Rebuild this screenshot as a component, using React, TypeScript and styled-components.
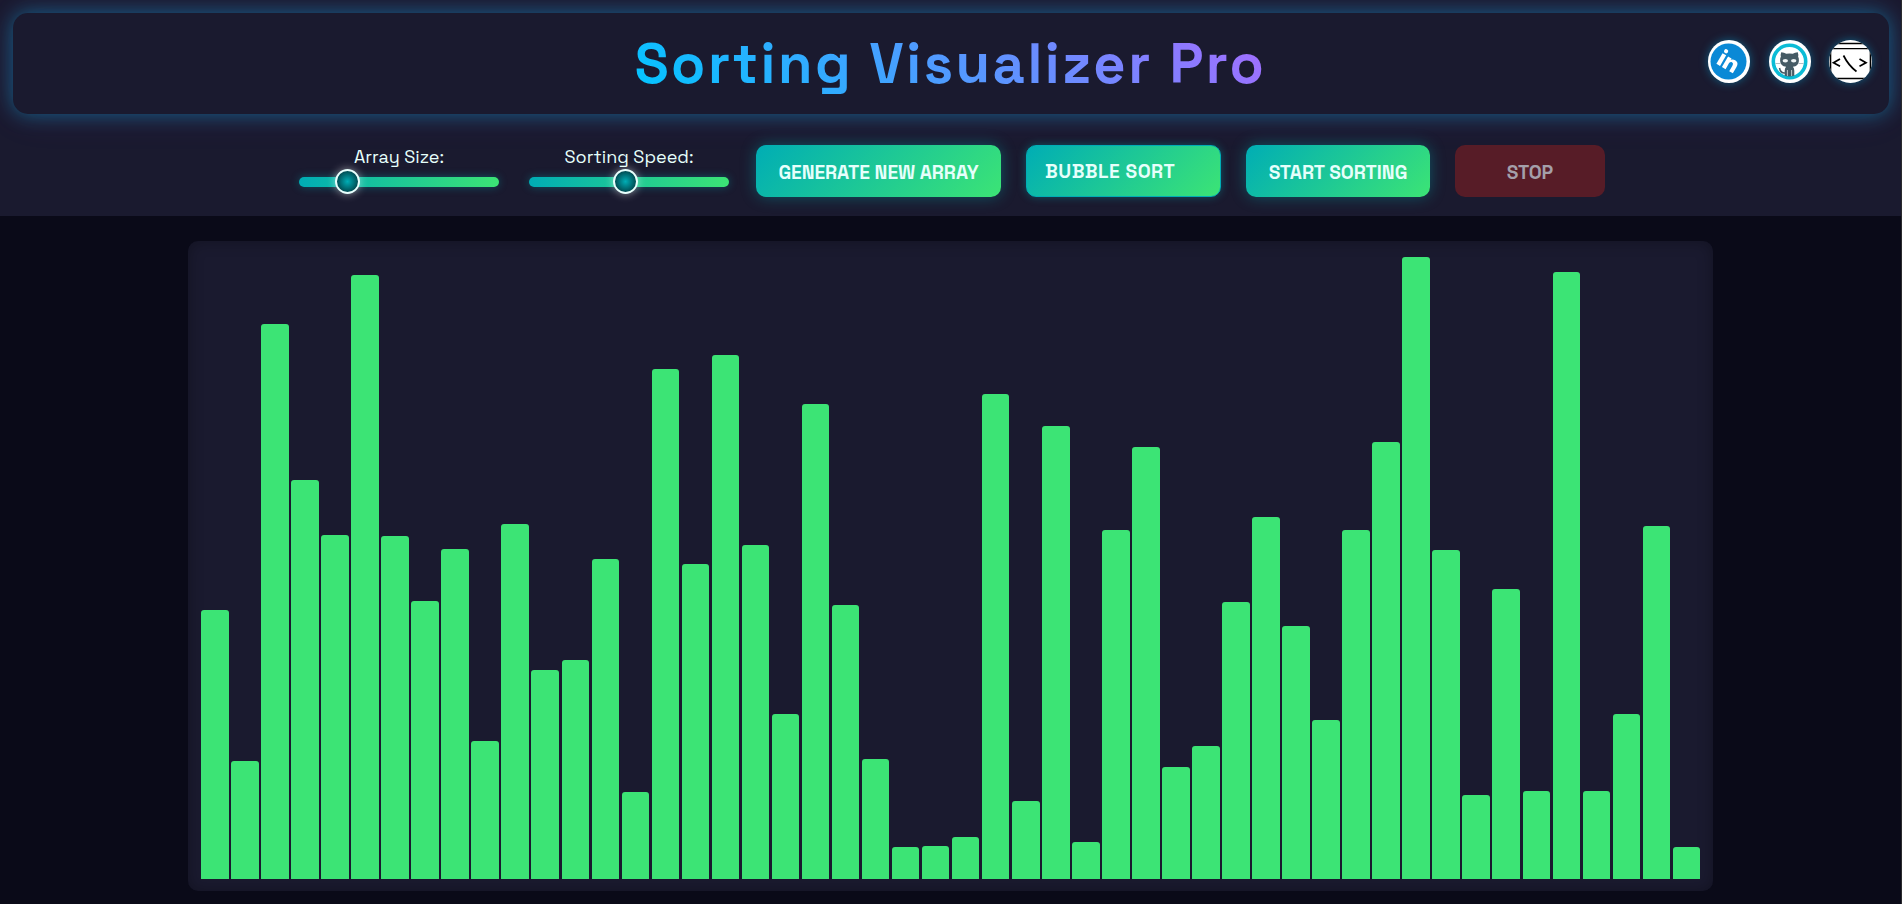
import React from "react";
import styled, { createGlobalStyle } from "styled-components";

const GlobalStyle = createGlobalStyle`
  * { box-sizing: border-box; }
  html { overflow: hidden; }
  body {
    margin: 0;
    background: #0a0a18;
    color: #e6fffb;
    font-family: "Space Grotesk", Inter, sans-serif;
    overflow: hidden;
  }
`;

const Page = styled.div`
  width: 1902px;
  height: 904px;
  border-right: 1px solid #2b2b2e;
  overflow: hidden;
`;

const Top = styled.div`
  height: 216px;
  padding: 13px 12px 0 13px;
  background: #1a1a2f;
  overflow: hidden;
`;

const Header = styled.header`
  display: grid;
  grid-template-columns: 1fr auto 1fr;
  align-items: center;
  height: 101px;
  padding-right: 17px;
  border-radius: 15px;
  background: #1a1a2f;
  box-shadow: 0 0 20px rgba(0, 198, 255, 0.4), 0 0 40px rgba(166, 108, 255, 0.1);
`;

const Title = styled.h1`
  grid-column: 2;
  margin: 0 -16px 0 0;
  font-size: 56px;
  line-height: 70px;
  font-weight: 700;
  letter-spacing: 2.5px;
  white-space: nowrap;
  background: linear-gradient(45deg, #00c6ff, #a66cff);
  background-clip: text;
  -webkit-background-clip: text;
  color: transparent;
`;

const Links = styled.nav`
  display: flex;
  justify-content: flex-end;
  gap: 18.3px;
  margin-top: -4px;
`;

const IconLink = styled.a`
  display: flex;
  justify-content: center;
  width: 42.6px;
  height: 43px;
  border-radius: 50%;
  overflow: hidden;
  background: #fff;
  box-shadow: 0 0 10px rgba(0, 198, 255, 0.4);

  svg {
    flex: none;
  }
`;

const Controls = styled.div`
  display: flex;
  align-items: flex-start;
  margin: 31px 0 0 286px;
  height: 52px;
`;

const SliderGroup = styled.label<{ $after: number }>`
  display: flex;
  flex-direction: column;
  align-items: center;
  width: 200px;
  margin-right: ${(p) => p.$after}px;
`;

const SliderLabel = styled.span`
  font-size: 18px;
  line-height: 24px;
  white-space: nowrap;
`;

const Slider = styled.input`
  appearance: none;
  display: block;
  width: 200px;
  height: 10px;
  margin: 8px 0 0;
  border-radius: 5px;
  background: linear-gradient(90deg, #00adb5, #3ce475);
  box-shadow: 0 0 8px rgba(0, 173, 181, 0.4);

  &::-webkit-slider-thumb {
    appearance: none;
    width: 25px;
    height: 25px;
    margin-top: -1px;
    border: 2px solid #e8fffd;
    border-radius: 50%;
    background: radial-gradient(circle, #00adb5, #00252b);
    box-shadow: 0 0 8px rgba(255, 255, 255, 0.5);
  }
`;

const Button = styled.button<{ $width: number; $danger?: boolean }>`
  width: ${(p) => p.$width}px;
  height: 52px;
  margin-right: 25px;
  padding: 3px 0 0;
  border: 0;
  border-radius: 10px;
  font: 700 19.2px/49px "Space Grotesk", Inter, sans-serif;
  letter-spacing: -0.05px;
  white-space: nowrap;
  color: ${(p) => (p.$danger ? "#a49fa9" : "#e6fffb")};
  background: ${(p) => (p.$danger ? "#571c27" : "linear-gradient(135deg, #00adb5, #3ce475)")};
  box-shadow: ${(p) => (p.$danger ? "none" : "0 0 15px rgba(0, 173, 181, 0.4)")};
`;

const AlgorithmButton = styled(Button)`
  padding: 2px 0 0 18px;
  border: 1px solid #00adb5;
  line-height: 48px;
  text-align: left;
  font-weight: 600;
  letter-spacing: 0.5px;
  box-shadow: 0 0 8px rgba(0, 173, 181, 0.4);
`;

const Chart = styled.main`
  display: flex;
  align-items: flex-end;
  gap: 2.5px;
  width: 1524.675px;
  height: 650px;
  margin: 25px 0 0 188.33px;
  padding: 12px 12.8px;
  border-radius: 10px;
  background: #1a1a2f;
  box-shadow: inset 0 0 15px rgba(0, 0, 0, 0.3);
`;

const Bar = styled.div`
  flex: 1;
  border-radius: 3px 3px 0 0;
  background: #3ce475;
`;

const values = [
  269, 118, 555, 399, 344, 604, 343, 278, 330, 138, 355, 209, 219, 320, 87, 510, 315,
  524, 334, 165, 475, 274, 120, 32, 33, 42, 485, 78, 453, 37, 349, 432, 112, 133,
  277, 362, 253, 159, 349, 437, 622, 329, 84, 290, 88, 607, 88, 165, 353, 32,
];

function LinkedInIcon() {
  return (
    <svg width="43" height="43" viewBox="0 0 43 43">
      <circle cx="21.5" cy="21.5" r="18" fill="#0a89d6" />
      <g transform="rotate(30 21.5 21.5)" fill="#fff">
        <circle cx="14.3" cy="13.8" r="2.1" />
        <rect x="12.2" y="17.3" width="4.2" height="12.3" />
        <path d="M18.6 17.300h4v1.700c1-1.500 2.300-2 4-2 3.400 0 4.600 2.200 4.600 5.600v7h-4.200v-6.100c0-2-.6-3-1.900-3-1.600 0-2.300 1.200-2.300 3.200v5.900h-4.200z" />
      </g>
    </svg>
  );
}

function CatIcon() {
  return (
    <svg width="43" height="43" viewBox="0 0 43 43">
      <circle cx="21.500" cy="21.500" r="16.200" fill="#fff" stroke="#0bbcd6" strokeWidth="3.600" />
      <path d="M13.200 12.200q3 0 5 1.600 3.300-.6 6.600 0 2-1.600 5-1.600.8 2.400.3 4.400 1 1.600.8 4.400-.4 5-6 5.800 1.400 1.500 1.400 4v5q-4.800 1.200-9.600 0v-5q0-2.500 1.400-4-5.600-.8-6-5.800-.2-2.800.8-4.400-.5-2 .3-4.400z" fill="#455a64" />
      <path d="M17 33q-4.500.3-5.500-5" fill="none" stroke="#455a64" strokeWidth="1.500" />
      <ellipse cx="17.300" cy="20.700" rx="2.700" ry="1.700" fill="#eef3f4" />
      <ellipse cx="25.700" cy="20.700" rx="2.700" ry="1.700" fill="#eef3f4" />
      <path d="M19.400 30v6M23.600 30v6" stroke="#dce3e6" strokeWidth=".8" />
      <path d="M7.500 23.500h5M30.500 23.500h5" stroke="#90a4ae" strokeWidth=".7" />
    </svg>
  );
}

function CodeIcon() {
  return (
    <svg width="43" height="43" viewBox="0 0 43 43" fill="none" stroke="#000">
      <path d="M0 3.500h43M0 8.700h43M0 38.500h43" strokeWidth="1.300" />
      <path d="M1.500 8v31M41.500 8v31" strokeWidth="1.600" />
      <path d="M11 19l-6.500 3.700 6.500 3.500M30.500 19l6.500 3.700-6.500 3.500M14.500 15.500q5 10 13 16" strokeWidth="1.700" />
    </svg>
  );
}

export default function App() {
  return (
    <>
      <GlobalStyle />
      <Page>
        <Top>
          <Header>
            <Title>Sorting Visualizer Pro</Title>
            <Links>
              <IconLink><LinkedInIcon /></IconLink>
              <IconLink><CatIcon /></IconLink>
              <IconLink><CodeIcon /></IconLink>
            </Links>
          </Header>
          <Controls>
            <SliderGroup $after={30}>
              <SliderLabel>Array Size:</SliderLabel>
              <Slider type="range" min={5} max={200} defaultValue={45} />
            </SliderGroup>
            <SliderGroup $after={27}>
              <SliderLabel>Sorting Speed:</SliderLabel>
              <Slider type="range" min={0} max={1000} defaultValue={480} />
            </SliderGroup>
            <Button $width={245}>GENERATE NEW ARRAY</Button>
            <AlgorithmButton $width={195}>BUBBLE SORT</AlgorithmButton>
            <Button $width={184}>START SORTING</Button>
            <Button $width={150} $danger disabled>STOP</Button>
          </Controls>
        </Top>
        <Chart>
          {values.map((value, i) => (
            <Bar key={i} style={{ height: value }} />
          ))}
        </Chart>
      </Page>
    </>
  );
}
